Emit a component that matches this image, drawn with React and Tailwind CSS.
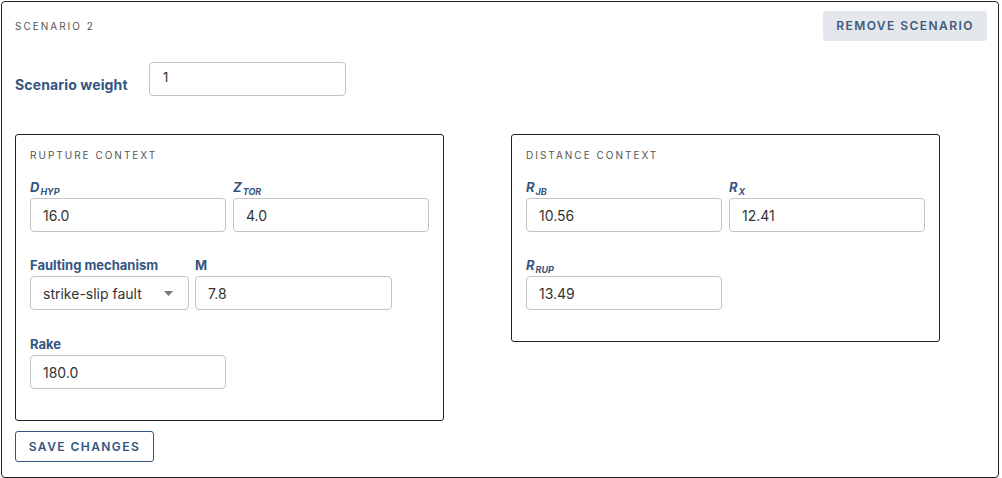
import { useState } from 'react'

const labelCls = 'h-[16px] leading-[16px] mb-[3px] text-[13px] font-bold text-[#34557f] whitespace-nowrap'
const inputCls = 'h-[34px] rounded-[4px] border border-[#c4c4c4] bg-white px-[12px] text-[14px] text-[#333] outline-none'

function Sub({ main, sub }) {
  return (
    <span className="italic">
      {main}
      <span className="text-[9px] relative top-[3px] ml-[1px]">{sub}</span>
    </span>
  )
}

function Field({ label, value, width = 'w-[196px]' }) {
  const [val, setVal] = useState(value)
  return (
    <div className="flex flex-col">
      <div className={labelCls}>{label}</div>
      <input className={`${inputCls} ${width}`} value={val} onChange={e => setVal(e.target.value)} />
    </div>
  )
}

function Box({ title, height, children }) {
  return (
    <div className={`w-[429px] ${height} rounded-[3px] border border-[#222] pt-[13px] px-[14px]`}>
      <div className="text-[10px] leading-[14px] tracking-[0.2em] text-[#555] mb-[17px]">{title}</div>
      <div className="flex flex-col gap-[25px]">{children}</div>
    </div>
  )
}

export default function App() {
  const [weight, setWeight] = useState('1')
  return (
    <div className="p-px bg-white" style={{ fontFamily: 'Inter, "Open Sans", sans-serif' }}>
      <div className="w-[998px] h-[477px] rounded-[4px] border border-[#222] pl-[13px] pr-[11px] pt-[9px] flex flex-col">
        <div className="flex justify-between items-center h-[30px]">
          <div className="text-[10px] tracking-[0.2em] text-[#555]">SCENARIO 2</div>
          <button className="h-[30px] w-[164px] rounded-[3px] bg-[#e4e7ec] text-[12px] font-semibold tracking-[0.12em] text-[#3f5b7d]">
            REMOVE SCENARIO
          </button>
        </div>

        <div className="flex items-end gap-[20px] mt-[21px]">
          <div className="w-[114px] text-[14px] leading-[18px] font-bold tracking-[0.01em] text-[#34557f] mb-[2px] whitespace-nowrap">Scenario weight</div>
          <input
            className="h-[34px] w-[197px] rounded-[4px] border border-[#c4c4c4] px-[13px] pb-[4px] text-[13px] text-[#333] outline-none"
            value={weight}
            onChange={e => setWeight(e.target.value)}
          />
        </div>

        <div className="flex items-start gap-[67px] mt-[38px]">
          <Box title="RUPTURE CONTEXT" height="h-[287px]">
            <div className="flex gap-[7px]">
              <Field label={<Sub main="D" sub="HYP" />} value="16.0" />
              <Field label={<Sub main="Z" sub="TOR" />} value="4.0" />
            </div>
            <div className="flex gap-[6px]">
              <div className="flex flex-col">
                <div className={labelCls}>Faulting mechanism</div>
                <div className={`${inputCls} w-[159px] flex items-center justify-between pr-[15px]`}>
                  <span>strike-slip fault</span>
                  <svg width="9" height="5" viewBox="0 0 9 5"><path d="M0 0h9L4.5 5z" fill="#777" /></svg>
                </div>
              </div>
              <Field label="M" value="7.8" width="w-[197px]" />
            </div>
            <div className="mt-px">
              <Field label="Rake" value="180.0" />
            </div>
          </Box>

          <Box title="DISTANCE CONTEXT" height="h-[208px]">
            <div className="flex gap-[7px]">
              <Field label={<Sub main="R" sub="JB" />} value="10.56" />
              <Field label={<Sub main="R" sub="X" />} value="12.41" />
            </div>
            <Field label={<Sub main="R" sub="RUP" />} value="13.49" />
          </Box>
        </div>

        <button className="mt-[10px] h-[31px] w-[139px] rounded-[3px] border border-[#34557f] text-[12px] font-semibold tracking-[0.12em] text-[#34557f]">
          SAVE CHANGES
        </button>
      </div>
    </div>
  )
}
